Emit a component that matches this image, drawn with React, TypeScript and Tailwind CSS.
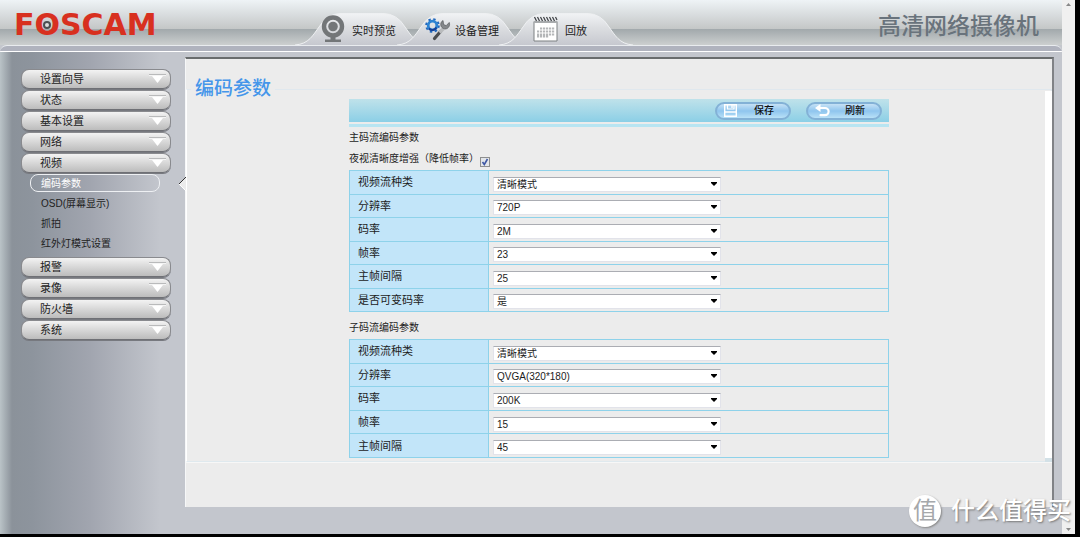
import React from 'react';

type Option = { id: string; label: string; value: string };

const mainStream: Option[] = [
  { id: 'main-type', label: '视频流种类', value: '清晰模式' },
  { id: 'main-resolution', label: '分辨率', value: '720P' },
  { id: 'main-bitrate', label: '码率', value: '2M' },
  { id: 'main-fps', label: '帧率', value: '23' },
  { id: 'main-gop', label: '主帧间隔', value: '25' },
  { id: 'main-vbr', label: '是否可变码率', value: '是' },
];

const subStream: Option[] = [
  { id: 'sub-type', label: '视频流种类', value: '清晰模式' },
  { id: 'sub-resolution', label: '分辨率', value: 'QVGA(320*180)' },
  { id: 'sub-bitrate', label: '码率', value: '200K' },
  { id: 'sub-fps', label: '帧率', value: '15' },
  { id: 'sub-gop', label: '主帧间隔', value: '45' },
];

const menuTop = ['设置向导', '状态', '基本设置', '网络', '视频'];
const menuBottom = ['报警', '录像', '防火墙', '系统'];
const videoMenu = ['编码参数', 'OSD(屏幕显示)', '抓拍', '红外灯模式设置'];

const CameraIcon = () => (
  <svg className="w-6 h-7" viewBox="0 0 24 28" fill="none">
    <circle cx="12" cy="11.5" r="9" stroke="#737678" strokeWidth="4.4" />
    <circle cx="12" cy="11.5" r="4.8" fill="#737678" />
    <path d="M9.500 21h5v4h-5z" fill="#737678" />
    <path d="M4 24.500h16v2.500H4z" fill="#737678" />
  </svg>
);

const ToolsIcon = () => (
  <svg className="w-[26px] h-6" viewBox="0 0 26 24" fill="none">
    <circle cx="7.500" cy="8.500" r="6.300" stroke="#2268bd" strokeWidth="2" strokeDasharray="2.400 2.550" />
    <circle cx="7.500" cy="8.500" r="4.300" stroke="#2d83d2" strokeWidth="2.800" />
    <path d="M4 11.500a4.600 4.600 0 0 0 7.500-1" stroke="#173f96" strokeWidth="2" />
    <path d="M9.500 21.500l6-7" stroke="#4a4c4f" strokeWidth="3.200" strokeLinecap="round" />
    <path d="M14.500 15.500l4-4" stroke="#b9bbbd" strokeWidth="3.600" />
    <path d="M18 3.500c-2.500 1.500-3 5-1 7s5.500 2 7-1c.8-1.500.7-3 .2-4l-3 3.200-2.700-1.200z" fill="#85888b" stroke="#5d6063" strokeWidth=".8" />
  </svg>
);

const CalendarIcon = () => (
  <svg className="w-[25px] h-[26px]" viewBox="0 0 25 26" fill="none">
    <path d="M1 5.500h23V25H1z" fill="#fff" stroke="#7d8082" />
    <path d="M1 6h23" stroke="#a9acae" strokeWidth="2" />
    <path d="M1.500 1l2 4M4.500 1l2 4M7.500 1l2 4M10.500 1l2 4M13.500 1l2 4M16.500 1l2 4M19.500 1l2 4M22.500 1l1.500 3" stroke="#3e4144" strokeWidth="1.200" />
    <path d="M7 12.500h15M4 15.500h18M4 18.500h18M4 20.500h12" stroke="#b4b6b8" strokeWidth="2.200" strokeDasharray="2.200 .8" />
  </svg>
);

const SaveIcon = () => (
  <svg className="w-[13px] h-[13px]" viewBox="0 0 13 13" fill="none" stroke="#fff">
    <path d="M.7.700h11.600v11.600H.7z" strokeWidth="1.400" />
    <path d="M3.500 1v4h6.500V1" strokeWidth="1.200" />
    <path d="M8 1v3" strokeWidth="1.300" />
    <path d="M1 8h11" strokeWidth="1.500" />
  </svg>
);

const RefreshIcon = () => (
  <svg className="w-[15px] h-[13px]" viewBox="0 0 15 13" fill="none">
    <path d="M3 4h7a3.600 3.600 0 0 1 0 7.200H5.500" stroke="#fff" strokeWidth="2.200" strokeLinecap="round" />
    <path d="M0 4l5.500-4v8z" fill="#fff" />
  </svg>
);

const Tab = ({ text, className, children }: { text: string; className: string; children: React.ReactNode }) => (
  <a href="#" className={`relative flex items-center w-[134px] h-8 -mr-8 text-[11px] text-[#222] ${className}`}>
    <svg className="absolute inset-0 w-full h-full" viewBox="0 0 134 32" fill="none">
      <defs>
        <linearGradient id="tabFill" x1="0" y1="0" x2="0" y2="1">
          <stop offset="0" stopColor="#f1f3f5" />
          <stop offset=".45" stopColor="#dcdee1" />
          <stop offset="1" stopColor="#c6c8cf" />
        </linearGradient>
      </defs>
      <path
        d="M0 32C14 31 18 22 24 14Q32 .5 46 .5H88Q102 .5 110 14C116 22 120 31 134 32Z"
        fill="url(#tabFill)"
      />
      <path d="M0 32C14 31 18 22 24 14Q32 .5 46 .5H88Q102 .5 110 14C116 22 120 31 134 32" stroke="#eef0f2" />
    </svg>
    <span className="relative">{children}</span>
    <span className="relative pt-1">{text}</span>
  </a>
);

const MenuButton = ({ text }: { text: string }) => (
  <button className="flex items-center justify-between w-[150px] h-5 pl-[18px] pr-1 rounded-lg border border-[#898a8e] border-b-[#6f7075] bg-gradient-to-b from-[#f3f3f3] to-[#bcbcbc] text-[11px] text-[#222] shadow-[0_1px_0_#77797f]">
    {text}
    <svg className="w-[17px] h-[10px]" viewBox="0 0 17 10">
      <path d="M0 .5h17" stroke="#b9babb" />
      <path d="M0 1.500h17" stroke="#f4f4f4" />
      <path d="M3 2h11L8.500 9z" fill="#fff" />
    </svg>
  </button>
);

const ToolButton = ({ text, children }: { text: string; children: React.ReactNode }) => (
  <button className="flex items-center w-[76px] h-[18px] pl-[7px] pr-[15px] justify-between rounded-full border-2 border-[#83b1d6] bg-gradient-to-b from-[#c5e1f5] via-[#8fc5ee] to-[#b9e1f7] text-[10px] font-medium text-[#111]">
    {children}
    {text}
  </button>
);

const ParamTable = ({ rows, className }: { rows: Option[]; className: string }) => (
  <table className={`w-full table-fixed border-collapse border border-[#8ed2ea] ${className}`}>
    <tbody>
      {rows.map((row) => (
        <tr key={row.id} className="border-b border-[#8ed2ea]">
          <th className="w-[139px] p-0 pl-2 border-r border-[#8ed2ea] bg-[#c2e5f9] text-left text-[11px] leading-4 font-normal">
            <label htmlFor={row.id}>{row.label}</label>
          </th>
          <td className="p-0 pl-1 pt-1">
            <div className="relative w-[228px]">
              <select
                id={row.id}
                className="block w-full h-[15px] pt-px pl-[3px] appearance-none border border-[#e2e3ea] border-t-[#abadb3] bg-white text-[10px] leading-3"
              >
                <option>{row.value}</option>
              </select>
              <svg className="absolute right-1 top-[5px] w-[6px] h-1 pointer-events-none" viewBox="0 0 6 4">
                <path d="M0 0h6v1L3 4 0 1z" fill="#000" />
              </svg>
            </div>
          </td>
        </tr>
      ))}
    </tbody>
  </table>
);

const Header = () => (
  <header>
    <div className="flex items-end h-[45px] bg-[linear-gradient(#eef3f6,#c4c7c7_64%,#a2a9ac_65%,#cccfcf)]">
      <div className="w-[295px] pl-[14px] pb-1">
        <div className="relative w-fit font-['DejaVu_Sans'] text-[30px] leading-8 font-bold text-[#d8301f]">
          FOSCAM
          {/* lens inside the O */}
          <svg className="absolute left-[28px] top-[11px] w-[10px] h-[10px]" viewBox="0 0 10 10">
            <circle cx="5" cy="5" r="3" fill="#ddd" stroke="#4b4f52" strokeWidth="2" />
          </svg>
        </div>
      </div>
      <nav className="flex">
        <Tab text="实时预览" className="pl-[26px] gap-[7px]"><CameraIcon /></Tab>
        <Tab text="设备管理" className="pl-7 gap-1"><ToolsIcon /></Tab>
        <Tab text="回放" className="pl-[34px] gap-[7px]"><CalendarIcon /></Tab>
      </nav>
      <div className="ml-auto pr-[23px] pb-0.5 font-['Liberation_Serif','Noto_Sans_CJK_SC',serif] text-[23px] leading-8 font-medium text-[#69737c]">
        高清网络摄像机
      </div>
    </div>
    <div className="h-[7px] rounded-t-lg border-t border-b border-t-[#e9ecef] border-b-white bg-[#b0b3be]" />
  </header>
);

const Sidebar = () => (
  <aside className="w-[185px] shrink-0 pl-[21px] pt-[17px]">
    <nav className="flex flex-col gap-px">
      {menuTop.map((item) => <MenuButton key={item} text={item} />)}
      <ul className="flex flex-col gap-0.5 pb-1 pl-[9px] text-[10px] text-[#222]">
        {videoMenu.map((item, i) => (
          <li key={item}>
            <a
              href="#"
              className={
                i === 0
                  ? 'flex items-center w-[130px] h-[18px] pl-[10px] rounded-lg border border-[#eef0f3] text-white'
                  : 'flex items-center h-[18px] pl-[11px]'
              }
            >
              {item}
            </a>
          </li>
        ))}
      </ul>
      {menuBottom.map((item) => <MenuButton key={item} text={item} />)}
    </nav>
  </aside>
);

const EncodingPanel = () => (
  <main className="relative flex-1 mt-[5px] mb-[27px] pt-5 border-t-2 border-r-2 border-l border-t-[#696c6d] border-r-[#808286] border-l-[#f6f7f8] bg-[#ececec]">
    {/* pointer to the active menu item */}
    <svg className="absolute -left-2 top-[117px] w-2 h-4" viewBox="0 0 8 16">
      <path d="M8 1L1 8l7 7z" fill="#ececec" />
      <path d="M8 1L1 8" stroke="#333" />
      <path d="M1 8l7 7" stroke="#fff" />
    </svg>
    <div className="relative">
      <fieldset className="border border-[#e0e8ee] border-l-white border-b-[#dfe9ee] pb-[3px] shadow-[0_1px_0_#f7f7f7]">
        <legend className="ml-1 px-1 font-['Liberation_Serif','Noto_Sans_CJK_SC',serif] text-[19px] leading-5 font-medium text-[#4596ea]">
          编码参数
        </legend>
        <form className="w-[540px] mx-auto">
          <div className="flex items-center justify-end gap-[15px] h-[23px] pr-[7px] bg-gradient-to-b from-[#bfe2ea] to-[#8bcfe6]">
            <ToolButton text="保存"><SaveIcon /></ToolButton>
            <ToolButton text="刷新"><RefreshIcon /></ToolButton>
          </div>
          <div className="mt-0.5 h-[3px] bg-[#b8e5f2]" />
          <h2 className="text-[10px] leading-[21px]">主码流编码参数</h2>
          <div className="flex items-start gap-px h-[22px] text-[10px] leading-[22px]">
            <label htmlFor="night">夜视清晰度增强（降低帧率）</label>
            <span className="relative mt-[9px] w-[10px] h-[10px]">
              <input
                id="night"
                type="checkbox"
                defaultChecked
                className="peer block w-full h-full appearance-none border border-[#8e8f8f] bg-[#e3e6ea]"
              />
              <svg className="absolute inset-0 hidden peer-checked:block pointer-events-none" viewBox="0 0 10 10" fill="none">
                <path d="M2.500 5l1.800 2.500L7.500 2" stroke="#3f58a4" strokeWidth="1.600" />
              </svg>
            </span>
          </div>
          <ParamTable rows={mainStream} className="h-[142px]" />
          <h2 className="pt-[5px] text-[10px] leading-[22px]">子码流编码参数</h2>
          <ParamTable rows={subStream} className="h-[119px]" />
        </form>
      </fieldset>
      {/* inner scroll track */}
      <div className="absolute right-0 top-3 bottom-0 w-[7px] bg-white border-b-4 border-[#d3e1e7]" />
    </div>
  </main>
);

const Watermark = () => (
  <div className="absolute right-[9px] bottom-[10px] flex items-center gap-[10px] text-white">
    <span className="flex items-center justify-center w-8 h-8 rounded-full bg-white text-[24px] leading-8 text-[#a5a8ab] shadow-[1px_1px_2px_#888]">
      值
    </span>
    <span className="text-[24px] leading-8 font-medium [text-shadow:1px_1px_2px_#777]">什么值得买</span>
  </div>
);

export default function App() {
  return (
    <div className="relative flex min-h-screen pr-[5px] pb-[3px] bg-black font-['Liberation_Sans','Noto_Sans_CJK_SC',sans-serif] text-[#1c1c1c]">
      <div className="flex-1 flex flex-col bg-[#c4c7cd]">
        <Header />
        <div className="flex-1 flex pr-2 bg-[linear-gradient(90deg,#bac3c7,#8b929a_12px,#8d949d_32px,#a1a5af_90px,#c3c6cd_160px)]">
          <Sidebar />
          <EncodingPanel />
        </div>
      </div>
      {/* page scroll bar */}
      <div className="flex flex-col items-center justify-between w-[13px] py-[3px] bg-[#f0f0f0]">
        <svg className="w-[5px] h-[3px]" viewBox="0 0 5 3"><path d="M0 3h5L2.500 0z" fill="#888" /></svg>
        <svg className="w-[5px] h-[3px]" viewBox="0 0 5 3"><path d="M0 0h5L2.500 3z" fill="#888" /></svg>
      </div>
      <Watermark />
    </div>
  );
}
